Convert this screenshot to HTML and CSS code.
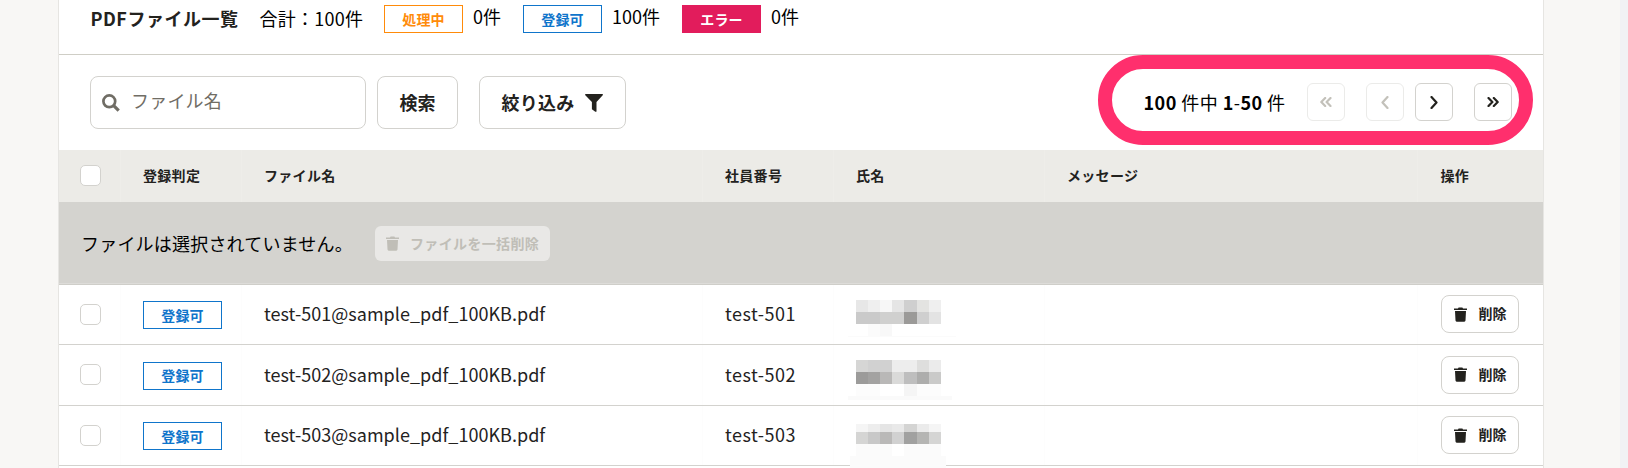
FILE: index.html
```html
<!DOCTYPE html>
<html lang="ja">
<head>
<meta charset="utf-8">
<title>PDFファイル一覧</title>
<link rel="stylesheet" href="styles.css">
</head>
<body>
<svg width="0" height="0" class="defs">
  <symbol id="trash" viewBox="0 0 13 15"><path d="M0 1.4h4L4.6.4h3.8l.6 1h4v1.5H0zM1 4h11l-.5 9.6q-.1 1.1-1.200 1.100H2.700q-1.100 0-1.200-1.100z"/></symbol>
</svg>
<main class="card">
  <header class="summary">
    <h1>PDFファイル一覧</h1>
    <span class="total">合計：100件</span>
    <span class="badge orange">処理中</span><span class="count c1">0件</span>
    <span class="badge blue">登録可</span><span class="count c2">100件</span>
    <span class="badge red">エラー</span><span class="count">0件</span>
  </header>
  <section class="toolbar">
    <div class="search">
      <svg width="18" height="18" viewBox="0 0 18 18" fill="none" stroke="#706d65"><circle cx="7.300" cy="7.300" r="5.900" stroke-width="2.700"/><path d="M11.700 11.700l5 5" stroke-width="3.200"/></svg>
      <span>ファイル名</span>
    </div>
    <button class="btn find"><span>検索</span></button>
    <button class="btn filter"><span>絞り込み</span><svg width="18" height="18" viewBox="0 0 18 18" fill="#23221e"><path d="M.6 0h16.800q.9.500.3 1.300L11.500 8v9.400q-.4.700-1.200.3L6.900 15.200V8L.3 1.300Q-.2.400.6 0z"/></svg></button>
    <nav class="pager">
      <span class="range"><b>100</b> 件中 <b>1</b>-<b>50</b> 件</span>
      <button class="page off"><svg width="12" height="10" viewBox="0 0 12 10"><path d="M5.200 1L1.300 5l3.900 4M10.500 1L6.600 5l3.900 4"/></svg></button>
      <button class="page off prev"><svg width="8" height="13" viewBox="0 0 8 13"><path d="M6.500 1L1.500 6.500l5 5.500"/></svg></button>
      <button class="page next"><svg width="8" height="13" viewBox="0 0 8 13"><path d="M1.500 1l5 5.500-5 5.500"/></svg></button>
      <button class="page last"><svg width="12" height="10" viewBox="0 0 12 10"><path d="M1.500 1l3.900 4-3.900 4M6.800 1l3.900 4-3.900 4"/></svg></button>
      <div class="highlight"></div>
    </nav>
  </section>
  <section class="table">
    <div class="row head">
      <div><i class="check"></i></div><div>登録判定</div><div>ファイル名</div><div>社員番号</div><div>氏名</div><div>メッセージ</div><div>操作</div>
    </div>
    <div class="bulk">
      <span>ファイルは選択されていません。</span>
      <button class="bulk-delete"><svg width="13" height="15"><use href="#trash"/></svg>ファイルを一括削除</button>
    </div>
    <div class="row">
      <div><i class="check"></i></div><div><span class="badge blue">登録可</span></div>
      <div class="name">test-501@sample_pdf_100KB.pdf</div><div class="num">test-501</div>
      <div class="person"><svg class="mosaic" width="108" height="63" shape-rendering="crispEdges">
        <path fill="#e7e7e7" d="M8 15h12v12H8z"/><path fill="#efefef" d="M20 15h12v12H20z"/><path fill="#f7f7f7" d="M32 15h12v12H32z"/><path fill="#e5e5e5" d="M44 15h12v12H44z"/><path fill="#cfcfcf" d="M56 15h13v12H56z"/><path fill="#e3e3e1" d="M69 15h12v12H69z"/><path fill="#efefef" d="M81 15h12v12H81z"/>
        <path fill="#cacaca" d="M8 27h24v12H8z"/><path fill="#d0d0cf" d="M32 27h24v12H32z"/><path fill="#9b9a98" d="M56 27h13v12H56z"/><path fill="#cfcfcf" d="M69 27h12v12H69z"/><path fill="#e3e3e3" d="M81 27h12v12H81z"/><path fill="#fbfbfb" d="M20 39h12v12H20z"/><path fill="#f8f8f8" d="M32 39h12v12H32z"/><path fill="#fbfbfb" d="M0 51h108v1H0z"/>
      </svg></div><div></div><div><button class="delete"><svg width="13" height="15"><use href="#trash"/></svg><span>削除</span></button></div>
    </div>
    <div class="row">
      <div><i class="check"></i></div><div><span class="badge blue">登録可</span></div>
      <div class="name">test-502@sample_pdf_100KB.pdf</div><div class="num">test-502</div>
      <div class="person"><svg class="mosaic" width="108" height="63" shape-rendering="crispEdges">
        <path fill="#d6d6d5" d="M8 15h12v12H8z"/><path fill="#d1d1d1" d="M20 15h24v12H20z"/><path fill="#ededed" d="M44 15h25v12H44z"/><path fill="#dededd" d="M69 15h12v12H69z"/><path fill="#ebebeb" d="M81 15h12v12H81z"/>
        <path fill="#9c9b9a" d="M8 27h12v12H8z"/><path fill="#a3a2a1" d="M20 27h12v12H20z"/><path fill="#b9b8b7" d="M32 27h12v12H32z"/><path fill="#dadad9" d="M44 27h12v12H44z"/><path fill="#bebebe" d="M56 27h13v12H56z"/><path fill="#adadac" d="M69 27h12v12H69z"/><path fill="#cacac9" d="M81 27h12v12H81z"/>
        <path fill="#fcfcfc" d="M8 39h24v12H8z"/><path fill="#f5f5f5" d="M56 39h13v12H56z"/><path fill="#fcfcfc" d="M69 39h24v12H69z"/><path fill="#fafafa" d="M0 51h104v4H0z"/>
      </svg></div><div></div><div><button class="delete"><svg width="13" height="15"><use href="#trash"/></svg><span>削除</span></button></div>
    </div>
    <div class="row">
      <div><i class="check"></i></div><div><span class="badge blue">登録可</span></div>
      <div class="name">test-503@sample_pdf_100KB.pdf</div><div class="num">test-503</div>
      <div class="person"><svg class="mosaic" width="108" height="63" shape-rendering="crispEdges">
        <path fill="#f5f5f5" d="M8 18h12v8H8z"/><path fill="#ededed" d="M20 18h12v8H20z"/><path fill="#e5e5e5" d="M32 18h12v8H32z"/><path fill="#e9e9e9" d="M44 18h12v8H44z"/><path fill="#d4d4d3" d="M56 18h13v8H56z"/><path fill="#ebebeb" d="M69 18h12v8H69z"/><path fill="#f5f5f5" d="M81 18h12v8H81z"/>
        <path fill="#d5d5d4" d="M8 26h12v12H8z"/><path fill="#c8c8c8" d="M20 26h12v12H20z"/><path fill="#bab9b8" d="M32 26h12v12H32z"/><path fill="#d1d1d1" d="M44 26h12v12H44z"/><path fill="#a1a1a0" d="M56 26h13v12H56z"/><path fill="#b5b5b3" d="M69 26h12v12H69z"/><path fill="#d5d5d4" d="M81 26h12v12H81z"/>
        <path fill="#fbfbfb" d="M8 38h36v12H8zM56 38h37v12H56zM2 50h96v13H2z"/>
      </svg></div><div></div><div><button class="delete"><svg width="13" height="15"><use href="#trash"/></svg><span>削除</span></button></div>
    </div>
  </section>
</main>
</body>
</html>
```
FILE: styles.css
```css
* { box-sizing: border-box; }
body {
  margin: 0;
  height: 468px;
  overflow: hidden;
  padding-left: 58px;
  background: linear-gradient(90deg, #f8f7f5 1620px, #f1f2f4 1620px);
  font: 18px/26px "Noto Sans CJK JP", sans-serif;
  color: #000;
}
.defs { position: absolute; }
.card { width: 1486px; height: 480px; background: #fff; border: 1px solid #e6e5e2; border-width: 0 1px; }
button { font: inherit; color: #23221e; background: #fff; border: 1px solid #d3d2ce; border-radius: 8px; padding: 0; display: flex; align-items: center; font-weight: 700; }
svg { display: block; flex: none; }

.summary { height: 55px; display: flex; padding: 5px 0 0 31.5px; border-bottom: 1px solid #cfcec6; white-space: nowrap; }
.summary h1 { margin: 0; width: 169px; font-size: 18px; line-height: 26px; font-weight: 700; letter-spacing: .5px; color: #23221e; }
.total { width: 124.5px; letter-spacing: .25px; }
.badge { width: 79px; height: 28px; border: 1px solid; display: flex; align-items: center; justify-content: center; font-size: 14px; line-height: 24px; font-weight: 700; padding-bottom: 1px; letter-spacing: .2px; }
.orange { color: #ff8b0a; }
.blue { color: #0f75cb; }
.red { color: #fff; background: #e21c5c; border-color: #e21c5c; }
.count { margin: -2px 0 0 10px; }
.c1 { width: 50px; }
.c2 { width: 70px; }

.toolbar { height: 95px; display: flex; padding: 21px 0 0 31px; }
.search { width: 276px; height: 53px; border: 1px solid #d3d2ce; border-radius: 8px; display: flex; align-items: center; padding: 0 0 0 11px; gap: 11px; color: #706d65; }
.search span { margin-top: -5px; letter-spacing: .2px; }
.btn { height: 53px; justify-content: center; }
.btn span { margin-top: -2px; }
.find { width: 81px; margin-left: 11px; }
.filter { width: 147px; margin-left: 21px; gap: 11px; letter-spacing: .2px; }
.pager { position: relative; margin-left: auto; padding: 7px 31.5px 0 0; display: flex; }
.range { margin: 6px 21px 0 0; white-space: nowrap; letter-spacing: .45px; }
.page { width: 38px; height: 38px; border-radius: 6px; justify-content: center; }
.page svg { fill: none; stroke: #23221e; stroke-width: 2.2; stroke-linecap: round; stroke-linejoin: round; }
.off { border-color: #ebebe9; }
.off svg { stroke: #c3c1ba; }
.prev, .last { margin-left: 21px; }
.next { margin-left: 11px; }
.highlight { position: absolute; right: 10px; top: -21px; width: 435px; height: 90px; border: 14px solid #ff2f6d; border-radius: 45px; }

.row { display: grid; grid-template-columns: 62px 121px 461px 131px 211px 373px 1fr; height: 60.5px; border-bottom: 1px solid #d3d2ce; color: #23221e; }
.row > div { display: flex; align-items: center; padding-left: 22px; white-space: nowrap; border-right: 1px solid #fdfdfd; }
.row > div:last-child { border-right: 0; padding-left: 22.5px; }
.row > div:first-child { padding-left: 21px; }
.row > .name, .row > .num { padding-bottom: 2px; }
.name { letter-spacing: .03px; }
.num { letter-spacing: .5px; }
.head { height: 52px; background: #ecebe7; border: 0; font-size: 14px; font-weight: 700; letter-spacing: .3px; }
.head > div { border-right-color: #eeede9; padding-bottom: 2px; }
.head > div:first-child { padding-bottom: 1px; }
.check { width: 21px; height: 21px; border: 1px solid #d3d2ce; border-radius: 5px; background: #fff; }
.bulk { height: 82.6px; background: #d4d3cf; display: flex; align-items: center; padding-left: 22px; box-shadow: inset 0 -1px #cfcec9, inset 0 -2px #dddcd9; }
.bulk span { width: 294px; letter-spacing: .2px; }
.bulk-delete { width: 175px; height: 35px; border: 0; background: #e9e8e6; color: #c0beb7; font-size: 14px; padding-left: 11px; gap: 11px; border-radius: 6px; letter-spacing: .35px; }
.bulk-delete svg, .delete svg { fill: currentColor; }
.row .badge { margin-top: 2px; }
.delete { width: 78px; height: 38px; font-size: 14px; padding-left: 12px; gap: 12px; }
.delete span { margin-top: -2px; }
.person { position: relative; }
.mosaic { position: absolute; left: 14px; top: 0; }
```
